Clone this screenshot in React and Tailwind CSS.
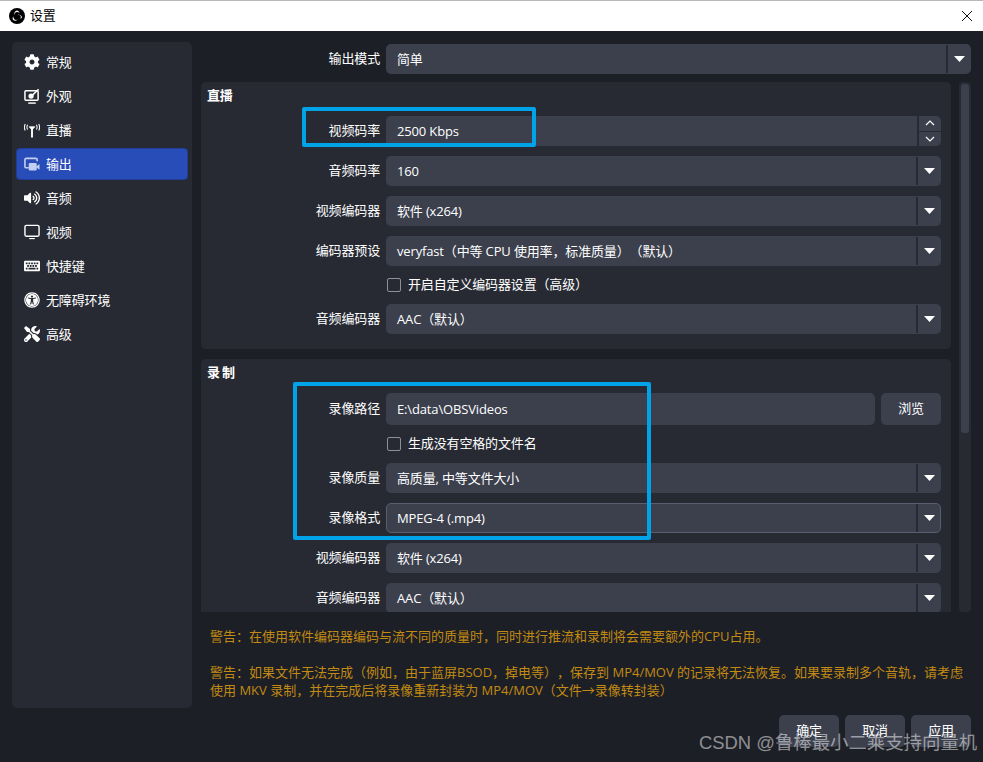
import React from "react";
import { FaCog, FaVolumeUp, FaKeyboard, FaUniversalAccess, FaTools } from "react-icons/fa";

const FONT = "font-['Open_Sans','Noto_Sans_CJK_SC',sans-serif]";

function Arrow() {
  return (
    <svg width="11" height="6" viewBox="0 0 11 6" className="block">
      <path d="M0 0H11L5.500 6Z" fill="#ffffff" />
    </svg>
  );
}

function Select({ value, focus }) {
  return (
    <div className={`flex-1 h-[30px] flex items-center bg-[#3c404d] rounded-[5px] text-[#ffffff] border ${focus ? "border-[#5a5f6f]" : "border-transparent"}`}>
      <span className="flex-1 pl-[10px] pt-[1px] text-[13px]">{value}</span>
      <span className="w-[24px] h-full border-l-2 border-[#272a33] flex items-center justify-center shrink-0">
        <Arrow />
      </span>
    </div>
  );
}

function Row({ label, children, h = "h-[30px]" }) {
  return (
    <div className={`flex items-center ${h} shrink-0`}>
      <div className="w-[185px] pr-[6px] pb-[1px] text-right text-[13px] text-white shrink-0">{label}</div>
      <div className="flex-1 flex h-full items-center gap-[6px]">{children}</div>
    </div>
  );
}

function Check({ label }) {
  return (
    <div className="flex items-center h-[18px] shrink-0 pl-[186px] text-[13px] text-white">
      <span className="w-[14px] h-[14px] rounded-[2px] border border-[#8d909a] bg-[#272a33] mr-[7px]" />
      {label}
    </div>
  );
}

function Section({ title, children, cls, titleCls }) {
  return (
    <div className={`relative bg-[#272a33] rounded-[5px] pr-[10px] pt-[34px] flex flex-col gap-[10px] shrink-0 ${cls}`}>
      <div className={`absolute left-[6px] top-[4px] text-[13px] font-bold text-white ${titleCls}`}>{title}</div>
      {children}
    </div>
  );
}

function Ic({ children }) {
  return <span className="w-[16px] h-[16px] flex items-center justify-center shrink-0 text-white">{children}</span>;
}

function ObsLogo() {
  return (
    <svg width="16" height="16" viewBox="0 0 16 16" className="shrink-0">
      <circle cx="8" cy="8" r="8" fill="#000" />
      <path d="M8.200 2.600A3 3 0 0 0 5.800 7.300A2.400 2.400 0 0 1 8.600 4.100Q10 4.500 10.500 5.200A3 3 0 0 0 8.200 2.600Z" fill="#fff" />
      <path d="M13 9.300A3 3 0 0 0 8.300 7.200A2.400 2.400 0 0 1 11.800 8.600Q11.900 10.200 11.200 11.100A3 3 0 0 0 13 9.300Z" fill="#fff" />
      <path d="M4 11.800A3 3 0 0 0 8.800 11.200A2.400 2.400 0 0 1 4.900 10.600Q4.200 9.400 4.300 8.300A3 3 0 0 0 4 11.800Z" fill="#fff" />
    </svg>
  );
}

const nav = [
  ["常规", <FaCog size={16} />],
  ["外观", (
    <svg width="17" height="17" viewBox="0 0 17 17" fill="none">
      <rect x="1" y="2.500" width="14" height="10" rx="1" stroke="#fff" strokeWidth="1.600" />
      <path d="M4.500 15.500h8" stroke="#fff" strokeWidth="1.500" />
      <circle cx="7.500" cy="8" r="2.800" fill="#fff" />
      <path d="M9 7L15.500 0.800" stroke="#fff" strokeWidth="1.600" />
    </svg>
  )],
  ["直播", (
    <svg width="17" height="15" viewBox="0 0 17 15" fill="none" stroke="#fff">
      <path d="M8.500 5V15" strokeWidth="2" />
      <path d="M5.500 3.500h6L8.500 7z" fill="#fff" strokeWidth="0.800" />
      <path d="M3.800 1.500Q2.400 4 3.800 6.500M1.300 0.500Q-0.400 4 1.300 7.500M13.200 1.500Q14.600 4 13.200 6.500M15.700 0.500Q17.400 4 15.700 7.500" strokeWidth="1.100" />
    </svg>
  )],
  ["输出", (
    <svg width="17" height="15" viewBox="0 0 17 15" fill="none">
      <path d="M5 11H2.500Q1 11 1 9.500V2.500Q1 1 2.500 1H12.500Q14 1 14 2.500V4" stroke="#c4d0f2" strokeWidth="1.700" />
      <rect x="5" y="6" width="8.500" height="8" rx="1.500" fill="#c4d0f2" />
      <path d="M13 9.500L16.500 7V13L13 10.500Z" fill="#c4d0f2" />
    </svg>
  ), true],
  ["音频", <FaVolumeUp size={18} />],
  ["视频", (
    <svg width="17" height="16" viewBox="0 0 17 16" fill="none">
      <rect x="1" y="1" width="15" height="11.500" rx="1.500" stroke="#fff" strokeWidth="1.500" />
      <path d="M5.500 15h6" stroke="#fff" strokeWidth="1.200" />
    </svg>
  )],
  ["快捷键", <FaKeyboard size={18} />],
  ["无障碍环境", <FaUniversalAccess size={16} />],
  ["高级", <FaTools size={16} />],
];

export default function App() {
  return (
    <div className={`${FONT} [text-spacing-trim:space-all] tracking-[-0.15px] relative w-[983px] h-[762px] overflow-hidden bg-[#1d1f27] flex flex-col`}>
      <div className="h-[31px] shrink-0 bg-white border-t border-[#b8b8b8] flex items-center pl-[9px] pr-[10px] text-black text-[13px]">
        <ObsLogo />
        <span className="ml-[5px] flex-1">设置</span>
        <svg width="12" height="12" viewBox="0 0 12 12">
          <path d="M1 1L11 11M11 1L1 11" stroke="#111" strokeWidth="1" />
        </svg>
      </div>

      <div className="flex-1 flex min-h-0 pl-[12px] pr-[12px] pt-[11px] pb-[2px] gap-[9px]">
        <aside className="w-[180px] h-[666px] shrink-0 bg-[#272a33] rounded-[5px] p-[4px] flex flex-col gap-[2px]">
          {nav.map(([t, icon, active]) => (
            <div key={t} className={`h-[32px] flex items-center gap-[6px] rounded-[4px] text-[13px] text-white ${active ? "pl-[7px] bg-[#284cb8] border border-[#1f3d96]" : "pl-[8px]"}`}>
              <Ic>{icon}</Ic>
              <span className="pt-[1px]">{t}</span>
            </div>
          ))}
        </aside>

        <main className="flex-1 min-w-0 flex flex-col">
          <div className="h-[30px] mt-[2px] flex items-center shrink-0">
            <div className="w-[185px] pr-[6px] pb-[1px] text-right text-[13px] text-white shrink-0">输出模式</div>
            <Select value="简单" />
          </div>

          <div className="flex gap-[8px] mt-[8px] h-[530px] shrink-0">
            <div className="w-[750px] flex flex-col gap-[10px] overflow-hidden shrink-0">
              <Section title="直播" cls="h-[267px]">
                <Row label="视频码率">
                  <div className="flex-1 h-[30px] flex items-center bg-[#3c404d] rounded-[5px] text-white">
                    <span className="flex-1 pl-[11px] pt-[1px] text-[13px]">2500 Kbps</span>
                    <span className="w-[24px] h-full border-l-2 border-[#272a33] flex flex-col shrink-0">
                      <span className="flex-1 flex items-center justify-center border-b border-[#272a33]">
                        <svg width="10" height="6" viewBox="0 0 10 6" fill="none"><path d="M1 5L5 1L9 5" stroke="#fff" strokeWidth="1.200" /></svg>
                      </span>
                      <span className="flex-1 flex items-center justify-center">
                        <svg width="10" height="6" viewBox="0 0 10 6" fill="none"><path d="M1 1L5 5L9 1" stroke="#fff" strokeWidth="1.200" /></svg>
                      </span>
                    </span>
                  </div>
                </Row>
                <Row label="音频码率"><Select value="160" /></Row>
                <Row label="视频编码器"><Select value="软件 (x264)" /></Row>
                <Row label="编码器预设"><Select value="veryfast（中等 CPU 使用率，标准质量）（默认）" /></Row>
                <Check label="开启自定义编码器设置（高级）" />
                <Row label="音频编码器"><Select value="AAC（默认）" /></Row>
              </Section>

              <Section title="录制" cls="h-[290px]" titleCls="tracking-[2px]">
                <Row label="录像路径" h="h-[32px]">
                  <div className="flex-1 h-[32px] flex items-center bg-[#3c404d] rounded-[5px] pl-[11px] pt-[1px] text-[13px] text-white">E:\data\OBSVideos</div>
                  <div className="w-[60px] h-[32px] flex items-center justify-center bg-[#3c404d] rounded-[5px] text-[13px] text-white">浏览</div>
                </Row>
                <Check label="生成没有空格的文件名" />
                <Row label="录像质量"><Select value="高质量, 中等文件大小" /></Row>
                <Row label="录像格式"><Select value="MPEG-4 (.mp4)" focus /></Row>
                <Row label="视频编码器"><Select value="软件 (x264)" /></Row>
                <Row label="音频编码器"><Select value="AAC（默认）" /></Row>
              </Section>
            </div>

            <div className="w-[12px] h-[530px] bg-[#272a33] rounded-[4px] p-[2px] shrink-0">
              <div className="h-[349px] bg-[#3c404d] rounded-[3px]" />
            </div>
          </div>

          <div className="mt-[15px] pl-[9px] text-[13px] tracking-normal leading-[18px] text-[#c18a12] whitespace-nowrap">
            <div>警告：在使用软件编码器编码与流不同的质量时，同时进行推流和录制将会需要额外的CPU占用。</div>
            <div className="h-[18px]" />
            <div>警告：如果文件无法完成（例如，由于蓝屏BSOD，掉电等），保存到 MP4/MOV 的记录将无法恢复。如果要录制多个音轨，请考虑</div>
            <div>使用 MKV 录制，并在完成后将录像重新封装为 MP4/MOV（文件→录像转封装）</div>
          </div>

          <div className="mt-[16px] flex justify-end gap-[6px]">
            {["确定", "取消", "应用"].map((t) => (
              <div key={t} className="w-[60px] h-[32px] bg-[#3c404d] rounded-[5px] flex items-center justify-center text-[13px] text-white">{t}</div>
            ))}
          </div>
        </main>
      </div>

      <div className="absolute left-[302px] top-[107px] w-[234px] h-[40px] border-[4px] border-[#00a2e8] rounded-[2px]" />
      <div className="absolute left-[293px] top-[382px] w-[358px] h-[158px] border-[4px] border-[#00a2e8] rounded-[2px]" />
      <div className="absolute left-[699px] top-[731px] text-[18.400px] tracking-normal leading-[24px] whitespace-nowrap text-[#ffffff80] font-['Liberation_Sans','Noto_Sans_CJK_SC',sans-serif]">CSDN @鲁棒最小二乘支持向量机</div>
    </div>
  );
}
